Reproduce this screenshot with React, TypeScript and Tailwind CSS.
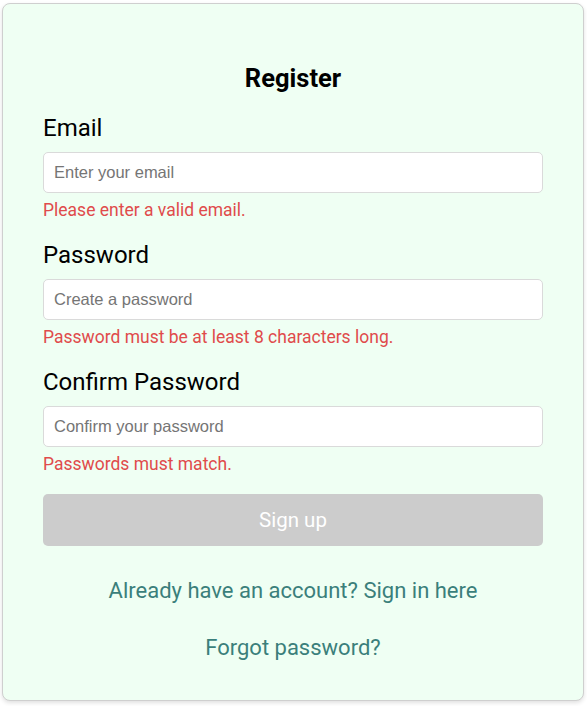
const fields = [
  { label: "Email", placeholder: "Enter your email", type: "email", error: "Please enter a valid email." },
  { label: "Password", placeholder: "Create a password", type: "password", error: "Password must be at least 8 characters long." },
  { label: "Confirm Password", placeholder: "Confirm your password", type: "password", error: "Passwords must match." },
];

export default function App() {
  return (
    <div className="min-h-screen bg-white pt-[3px] pl-[2px] pr-[3px] pb-[5px] font-['Roboto',sans-serif]">
      <div className="border border-[#cfcfcf] rounded-lg bg-[#effff3] shadow-[0_2px_4px_rgba(0,0,0,0.12)] px-10 pt-[58px] pb-[38px]">
        <h2 className="text-center text-[25.5px] leading-8 font-bold text-black">Register</h2>

        <form className="mt-[19px] flex flex-col">
          {fields.map((f) => (
            <div key={f.label} className="flex flex-col mb-[19px]">
              <label className="text-[24px] leading-[30px] text-black">{f.label}</label>
              <input
                type={f.type}
                placeholder={f.placeholder}
                className="mt-[9px] h-[41px] w-full rounded-[5px] border border-[#dadada] bg-white px-[10px] text-[16.5px] font-['Liberation_Sans',sans-serif] placeholder:text-[#757575] outline-none"
              />
              <span className="mt-[6px] text-[17.5px] leading-[22px] text-[#e04b4b]">{f.error}</span>
            </div>
          ))}

          <button
            type="button"
            disabled
            className="h-[52px] w-full rounded-[5px] bg-[#cccccc] text-[20.5px] text-white"
          >
            Sign up
          </button>
        </form>

        <p className="mt-[31px] text-center text-[22px] leading-[28px] text-[#3b7f7b]">
          Already have an account? Sign in here
        </p>
        <p className="mt-[29px] text-center text-[22px] leading-[28px] text-[#3b7f7b]">Forgot password?</p>
      </div>
    </div>
  );
}
